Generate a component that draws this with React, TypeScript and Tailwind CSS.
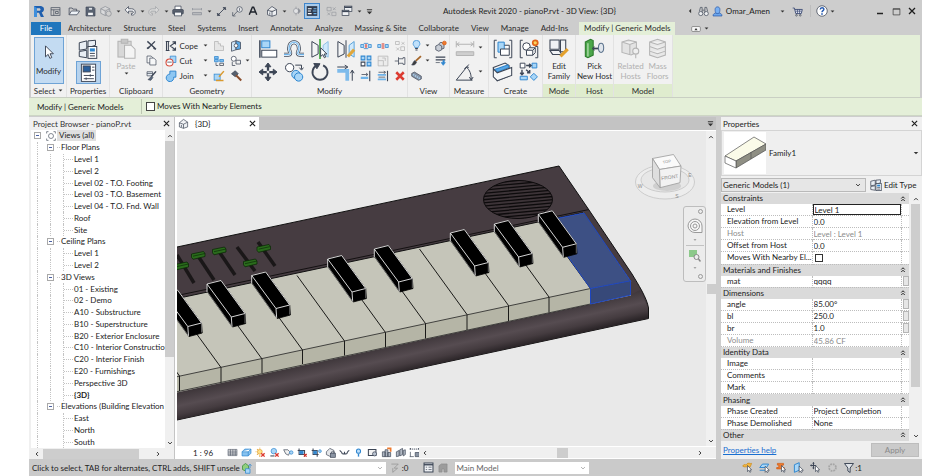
import { Fragment, type ReactNode } from "react";

const INK = "#3d4656";
const BLUE = "#2f86cf";
const SKY = "#a9d6f7";
const MUTE = "#b4b4b4";

/* Icon drawings, all on a 16 x 16 grid. */
const ICONS: Record<string, ReactNode> = {
  home: <><rect x="1.5" y="2.5" width="13" height="11" /><path d="M1.5 5.5h13M5.5 5.5v8M8 8h4v3H8z" /></>,
  open: <><path d="M1.5 13V4h4l1 1.5h5V8" /><path d="M1.5 13l3-5h11l-3.500 5z" fill="#eef2f7" /></>,
  save: <><path d="M1.5 1.5h11l2 2v11h-13z" fill="#5d6675" /><rect x="4" y="9" width="8" height="5" fill="#f4f6f8" /><path d="M5 2h6v4H5z" fill="#dfe3e8" /></>,
  sync: <><path d="M1 5l6-3 6 3v6l-6 3-6-3zM1 5l6 3 6-3M7 8v6" stroke="#8b8f96" fill="#d9dadc" /><circle cx="11.5" cy="11.5" r="3.5" stroke="#8b8f96" fill="#cfcfcf" /></>,
  undo: <path d="M1.5 6.5L6 2v3h4c3 0 5 2 5 4.500S13 13.500 11 13.500h-1v-2.300h1c2 0 2-3 0-3H6v3z" fill="#f3f4f6" />,
  redo: <path d="M14.500 6.500L10 2v3H6C3 5 1 7 1 9.500s2 4 4 4h1v-2.300H5c-2 0-2-3 0-3h5v3z" stroke="#a2a4a8" fill="#d8d8d8" />,
  print: <><path d="M4 6V1.500h8V6" fill="#fff" /><rect x="1" y="6" width="14" height="6" rx="1" fill="#59616e" /><rect x="3.5" y="9.5" width="9" height="5" fill="#f5f6f7" /></>,
  dimen: <path d="M2 4v3M14 4v3M2 5.500h12M2 10h12v3H2z" stroke="#8e9299" fill="#b9bbbe" />,
  measure: <><path d="M3 13L13 3" strokeWidth="1.3" /><path d="M1.500 10.500L5.500 14.500M10.500 1.500L14.500 5.500" strokeWidth="1.2" /><path d="M2 14l.5-3.500 3 3zM14 2l-.5 3.500-3-3z" fill={INK} /></>,
  tag: <><circle cx="11" cy="5" r="4" fill="#e8e9eb" /><path d="M8 7.500L2 14M1 9v5.500h4M11 3v4" /></>,
  textA: <path d="M2 14L7 2h2l5 12M4.200 9.500h7.600" strokeWidth="2.3" stroke="#1f242c" />,
  cube: <path d="M2 7l6-5 6 4v7l-6 2-6-2zM2 7l6 2 6-3M8 9v6M5 10v3" fill="#eef0f3" />,
  section: <><circle cx="8" cy="8" r="4" fill="#e2e3e5" stroke="#8b8f96" /><path d="M12 4l3 4-3 4zM8 1v3M8 12v3" fill="#8b8f96" stroke="#8b8f96" /></>,
  thin: <><rect x="1" y="1.5" width="14" height="13" fill="#2f3b4e" stroke="none" /><path d="M2.500 5h5M2.500 8h4M2.500 11.500h5" stroke="#fff" strokeWidth="1.5" /><path d="M10 5h4M9 8h5M10 11.500h4" stroke="#6fb6ee" strokeWidth="1.5" /></>,
  closeh: <path d="M1.500 2h6v5h-6zM8.500 9h6v5h-6zM10 2l4 4M14 2l-4 4M2 9.500l4 4M6 9.500l-4 4" stroke="#989ba0" />,
  switchw: <><rect x="4.5" y="1.5" width="10" height="7" fill="#eef0f3" /><path d="M4.500 3h10" strokeWidth="2" /><rect x="1.5" y="7" width="9" height="7" fill="#eef0f3" /><path d="M1.500 8.500h9" strokeWidth="2" /></>,
  bino: <><circle cx="4" cy="11" r="3" fill="#eceef0" /><circle cx="12" cy="11" r="3" fill="#eceef0" /><path d="M2 8l1.500-6h2.500v7M14 8l-1.500-6H10v7M6.500 6h3" /></>,
  user: <><path d="M1.500 14.500c0-4 3-4 4.500-4.500h4c1.500.5 4.500.5 4.500 4.500z" fill="#6ea8ec" stroke="#2453a5" /><path d="M4.500 5c0-5 7-5 7 0s-1.500 6-3.500 6-3.500-1-3.500-6z" fill="#79b0f2" stroke="#2453a5" /></>,
  cart: <><path d="M1 3h2.500l2 8h8l1.500-6H4" fill="#e2e6f2" stroke="#3c4a73" strokeWidth="1.3" /><path d="M5 7.500h9M8 5v6M11 5v6" stroke="#3c4a73" /><circle cx="6.5" cy="13.5" r="1.2" /><circle cx="12" cy="13.5" r="1.2" /></>,
  help: <><circle cx="8" cy="8" r="7" fill="#fff" stroke="#3d4656" /><path d="M5.700 6c0-3 4.800-3 4.800-.3 0 1.800-2.500 1.800-2.500 4" stroke="#2358b0" strokeWidth="1.9" /><circle cx="8" cy="12" r=".7" fill="#2358b0" stroke="#2358b0" /></>,
  cursor: <path d="M4 1v12.500l3-2.800 2 4.600 2.200-1-2-4.300H13z" fill="#fff" strokeWidth="1.1" />,
  typeprops: <><path d="M1 3l6-1.500V8L1 9zM8 1.500l6-.5v4l-6 2zM1 10l6-1v6l-6-1z" fill="#e9eef4" /><rect x="8" y="6" width="7" height="9.5" fill="#fff" /><rect x="9.5" y="7.5" width="4" height="2.5" fill={BLUE} stroke="none" /><path d="M9.500 11.500h4M9.500 13.500h4" /></>,
  props: <><rect x="2" y="1" width="12" height="14.5" fill="#fff" /><rect x="3.5" y="2.5" width="6" height="5" fill="#2a5f9c" /><path d="M11 3.500h2M11 6h2M4 10.500h8.500M4 13.200h8.500M9.500 9.500v2M6 12.200v2" /></>,
  paste: <><rect x="1.5" y="2.5" width="10" height="12" fill="#d8d8d8" stroke={MUTE} /><path d="M4 1h5v3H4z" fill="#c6c6c6" stroke={MUTE} /><path d="M6.500 5.500h5l3 3v7h-8z" fill="#f4f4f4" stroke={MUTE} /></>,
  cut: <><path d="M2 2l11 10M13 2L3 12" strokeWidth="2" /><path d="M1.500 12.500l3-2M14.500 13.500l-3.500-2" strokeWidth="2.5" /></>,
  copy: <><path d="M1.500 1.500h6l2 2v8h-8z" fill="#f6f7f8" /><path d="M5.500 4.500h6l3 3v7h-9z" fill="#f6f7f8" /></>,
  match: <><path d="M1.500 2.500h8v6h-8zM1.500 5h8" fill="#e8edf3" /><path d="M14.500 2L8 9.500" strokeWidth="2.2" /><path d="M8 9l2 2-3 4-4-1z" fill="#56657a" /></>,
  cope: <path d="M2 2v12M4.500 2v12M1 2h5M1 14h5M14 3L7 8l7 5M10 2.500h4v3.500M10 13.500h4V10" strokeWidth="1.4" />,
  cutg: <><path d="M7 1.500h7.500V10H7z" fill={SKY} stroke={BLUE} /><circle cx="6" cy="10" r="4.7" fill="#fff" stroke="#d64b3c" strokeWidth="1.4" /><path d="M3 9.500h6" stroke={INK} /></>,
  joing: <path d="M6.500 1.500h8v8h-3a5 5 0 11-5-4z" fill="#8ec7f2" stroke={BLUE} strokeWidth="1.3" />,
  notch: <path d="M2 2h5v3h3v3h4v6H2z" fill="#e6e6e6" stroke={MUTE} />,
  split: <><path d="M2 2h5v3H2zM9 6h5v3H9zM2 6h5v3H2z" fill="#7dbdf0" stroke={BLUE} /><path d="M9 11h5v3H9zM4 10v4h3" /></>,
  paintb: <><rect x="1.5" y="5.5" width="8" height="8" fill={SKY} stroke={BLUE} /><path d="M14.500 1.500L8 9M4 14h10" stroke="#d99a30" strokeWidth="2" /></>,
  wall: <><path d="M2 3l6-2v12l-6 2z" fill="#cfe5f7" /><path d="M8 1l6 2v9l-6 1z" fill="#5aa8e6" /><circle cx="8" cy="7.5" r="2.5" fill="#fff" /></>,
  beamj: <><circle cx="5" cy="5" r="3.3" fill="#fff" /><path d="M8 7h6v5H8zM3 9v5h4" fill="#f0f0f0" /></>,
  hammer: <><path d="M2 5l5-4 4 4-4 4z" fill="#56606e" /><path d="M8 7l7 7" stroke="#8a4d2c" strokeWidth="2.6" /></>,
  align: <><path d="M1.500 1v14" strokeWidth="1.2" /><rect x="3" y="1.5" width="6.5" height="5.5" fill={SKY} stroke={BLUE} /><rect x="3" y="9" width="12" height="5.5" fill="#fff" /></>,
  offset: (
    <>
      <path d="M0 12.500h3.500c1.500 0 1.800-1 1.200-2.200C3.200 7 4.500 2.500 8 2.500s4.800 4.500 3.300 7.800c-.6 1.200-.3 2.200 1.200 2.200H16" strokeWidth="3.2" />
      <path d="M0 12.500h3.500c1.500 0 1.800-1 1.200-2.200C3.200 7 4.500 2.500 8 2.500s4.800 4.500 3.300 7.800c-.6 1.200-.3 2.200 1.200 2.200H16" stroke="#e9f4fd" strokeWidth="2" />
      <path d="M0 12.500h3.500c1.500 0 1.800-1 1.200-2.200C3.200 7 4.500 2.500 8 2.500s4.800 4.500 3.300 7.800c-.6 1.200-.3 2.200 1.200 2.200H16" stroke="#5aa8e6" strokeWidth=".8" />
    </>
  ),
  mirrorA: <><path d="M1.500 2l5 3v7l-5 2.500z" fill="#f3f4f5" /><path d="M14.500 2l-4 3v7l4 2.500z" fill="#cfe8fb" stroke="#8fc0e6" /><path d="M8 0v16" stroke="#3aa33a" strokeWidth="1.3" /><path d="M8.500 7v7l1.700-1.500L11.500 15l1-.5-1.200-2.500H13.500z" fill="#fff" strokeWidth=".8" /></>,
  mirrorB: <><path d="M1.500 2l5 3v7l-5 2.500z" fill="#f3f4f5" /><path d="M14.500 2l-4 3v7l4 2.500z" fill="#cfe8fb" stroke="#5ba4da" /><path d="M8 1v14" /><path d="M14.500 8.500L9.500 14" stroke="#e0a63a" strokeWidth="2.4" /></>,
  move: <><path d="M8 3v10M3 8h10" strokeWidth="1.8" /><path d="M5.700 3.800L8 .8l2.300 3zM5.700 12.200L8 15.200l2.300-3zM3.800 5.700L.8 8l3 2.300zM12.200 5.700l3 2.300-3 2.300z" fill={INK} /><path d="M7 7h2v2H7z" fill="#f1f1f1" stroke="none" /></>,
  copym: <><circle cx="4.5" cy="4.5" r="3.3" fill="#fff" /><path d="M9 2.500h5v3M12.300 4.500L14 6.500l1.500-2" /><circle cx="9.5" cy="10" r="3.3" fill={SKY} stroke={BLUE} /><circle cx="11.7" cy="12" r="3.3" fill={SKY} stroke={BLUE} /></>,
  rotate: <><path d="M10.500 2.700a6 6 0 11-5 0" strokeWidth="1.5" /><path d="M3 1.200l5 .2-2.500 4z" fill={INK} /></>,
  trim: <><path d="M1 7h8v8" stroke="#7dbbeb" strokeWidth="3" /><path d="M1 4h8M7 2.500L9.500 4 7 5.500M13 15V7M11.500 9L13 6.500 14.500 9" /></>,
  splite: <><path d="M1 6h4v4H1zM11 6h4v4h-4z" fill={SKY} stroke={BLUE} /><path d="M7 8h2M8 5v6" stroke="#d9443a" strokeWidth="1.5" /><path d="M5 4.500h6M5 11.500h6" stroke={BLUE} /></>,
  splitg: <><path d="M1 6h4v4H1zM11 6h4v4h-4z" fill={SKY} stroke={BLUE} /><path d="M7 4v8M9 4v8" stroke="#d9443a" /></>,
  unpin: <path d="M2 2h5v4H2zM9 9h5v5H9zM3 10l4 4M7 10l-4 4M10 3l4 3M14 3l-4 3" stroke={MUTE} />,
  array: <><path d="M1.500 1.500h5v5h-5zM9.500 1.500h5v5h-5zM9.500 9.500h5v5h-5z" fill={SKY} stroke={BLUE} strokeWidth="1.4" /><path d="M1.500 9.500h5v5h-5z" fill="#fff" strokeWidth="1.4" /></>,
  scale: <path d="M1.500 1.500h13v13h-13zM1.500 7.500h7v7M11 4h-4M11 4v4" stroke={MUTE} fill="#ececec" />,
  pin: <path d="M1 8h5M6 3v10M6 5h6V3.500h2.500v9H12V11H6" fill="#f2f2f2" />,
  trims: <><path d="M13 1v14" strokeWidth="1.5" /><path d="M1 10.500h10" stroke="#6fb4ea" strokeWidth="3" /><path d="M2 6h8M8 4l2.500 2L8 8" /></>,
  trimm: <><path d="M14 1v14" strokeWidth="1.5" /><path d="M1 6.500h11M1 12.500h11" stroke="#6fb4ea" strokeWidth="2.5" /><path d="M2 3h9M2 9.500h9M9 1.500L11.500 3 9 5" /></>,
  del: <path d="M3 3l10 10M13 3L3 13" stroke="#dc3b31" strokeWidth="3.4" />,
  bulb: <><path d="M5.500 11c0-2-2.500-3-2.500-5.500a5 5 0 0110 0C13 8 10.500 9 10.500 11z" fill="#bfe0fb" stroke={BLUE} /><path d="M6 12.500h4M6.500 14.500h3" strokeWidth="1.5" /></>,
  displace: <><path d="M1 8l4-2 4 2v5l-4 2-4-2zM5 5l3-2 4 2v6l-3 1" fill="#c9ced6" /><circle cx="12.5" cy="4" r="2.5" fill="#ee7a2e" stroke="#d9601a" /></>,
  brush: <><path d="M14.500 1.500L7 8.500" stroke="#a5662a" strokeWidth="2.6" /><path d="M6 8l2 2.500C7 14 4 15 1 14.500 3 13 3 9 6 8z" fill="#3c3c3c" /></>,
  lines: <><path d="M1 3h14M1 7h14" strokeWidth="1.8" /><path d="M1 11h6" /><path d="M11.500 8v3H9l3 4 3-4h-1.500V8z" fill={BLUE} stroke={BLUE} /></>,
  tape: <><path d="M1 5l4-2 10 6v4l-4 2L1 9z" fill="#8793a5" /><path d="M3 6.500l10 6" stroke={SKY} strokeWidth="2" strokeDasharray="2 1.2" /></>,
  dim2: <><path d="M1 5h14M1 2.500v5M15 2.500v5M3.500 3.500L1.500 5l2 1.500M12.500 3.500l2 1.500-2 1.500" stroke={MUTE} /><path d="M1 11h14v3H1z" fill="#cfcfcf" stroke={MUTE} /></>,
  angle: <><path d="M1 14.500h13M1 14.500L11 2" /><path d="M9 4c3 2.500 4 6 4 10M7.500 5.500L9 4l2 .3M11.500 12l1.500 2.500 1.500-2.500" /></>,
  group: <><path d="M3 1H1v14h2M13 1h2v14h-2" /><path d="M4 2.500h5v8H4z" fill={SKY} stroke={BLUE} /><path d="M6 8h7v5H6zM9 5h4v3" fill="#fff" /></>,
  similar: <><path d="M3 1H1v14h2M13 6h2v9h-2" /><circle cx="6" cy="6" r="3" fill="#fff" /><path d="M6 9l2-2h5v4l-2 2H6zM6 9h5l2-2M11 9v4" fill="#fff" /><circle cx="13" cy="3" r="2" fill="#fbd15b" stroke="#e0641b" strokeWidth="1.4" /></>,
  folder: <><path d="M1 5l9-3.500 3 2v8L4 15z" fill="#f2f4f6" /><path d="M2 6.500l10-3.500 1 2-9 3.500z" fill="#5aa8e6" stroke={BLUE} /><path d="M1 6l3 3 11-4v6L4 15l-3-3z" fill="#f6f7f8" /></>,
  assemble: <><path d="M1 1h4v4H1z" fill="#fff" /><path d="M11 1h4v4h-4zM1 12h6v3H1zM12.500 9.500L15.500 12.500l-3 3-3-3z" fill={SKY} stroke={BLUE} /><path d="M6 3h4M8.500 1.500L10.200 3 8.500 4.500M2.500 6.500v4M1 9l1.500 1.700L4 9M6 6.500L9 9M9 6.800V9H6.800" strokeWidth="1.2" /></>,
  editfam: <><path d="M1.500 1.500h7v7h-7zM9.500 1.500h4v9h-4zM1.500 9.500h7l2 3h-7z" fill="#f0f2f5" /><path d="M15 8.500L9.500 14" stroke="#e3a02c" strokeWidth="2.4" /></>,
  host: <><path d="M1 3l4-2 2 1v11l-4 2-2-1z" fill="#4ca64a" stroke="#2c7a2c" /><path d="M3 4v10" stroke="#cfeccb" /><path d="M7 8h4" strokeWidth="1.3" /><path d="M8 6.500L6.500 8 8 9.500" /><ellipse cx="13" cy="7.5" rx="2" ry="3.5" fill="#dfe5ec" stroke="#5b728c" /></>,
  relhost: <><path d="M1.500 3l5-1.500 6 1.500v8l-4 2-7-2zM1.500 3l6 2 5-2M7.500 5v8" fill="#e3e3e3" stroke={MUTE} /><circle cx="12" cy="10" r="2.3" fill="#efefef" stroke={MUTE} /><path d="M12 12.500v3" stroke={MUTE} /></>,
  floors: <path d="M2 3l6-2 6 2v10l-6 2-6-2zM2 3l6 2 6-2M2 6.500l6 2 6-2M2 10l6 2 6-2" fill="#e8e8e8" stroke={MUTE} />,
  views: <><circle cx="8" cy="8" r="4" /><path d="M1 4V1h3M12 1h3v3M15 12v3h-3M4 15H1v-3" /></>,
  filter: <path d="M2 2h12L9.500 8v6l-3-2V8z" fill="#dfe3e8" strokeWidth="1.3" />,
  worksets: <><path d="M2 5l4-3 4 3v5l-4 2-4-2z" fill="#8fd07d" stroke="#3c8a35" /><path d="M6 9h6v6H6z" fill={SKY} stroke={BLUE} /><path d="M12 3v5M10 5l2-2 2 2" stroke={BLUE} /></>,
  editreq: <path d="M2 3h10l-6 6h5l-7 6V9" stroke="#8f8f8f" fill="#c9c9c9" />,
  optset: <><path d="M1.500 1.500h13v13h-13z" fill="#f0f2f5" strokeWidth="1.5" /><path d="M1.500 4h13" strokeWidth="2" /><path d="M4 7.500h2M8 7.500h4.500M4 11h2M8 11h4.500" /></>,
  optadd: <path d="M1.500 4.500l4-3h9v13h-5v-5h-3v5h-5z" fill="#9c9c9c" stroke="#8a8a8a" />,
  selA: <><path d="M1 6c3-5 4 0 6-3s5 0 7-1l-2 5H3z" fill="#f3b73d" stroke="#c9871a" /><path d="M8 5v9l2-2 1.500 3 1.500-1-1.500-2.500H14z" fill="#fff" /></>,
  selB: <><path d="M1 8l4-5h9l-3 5zM1 12h8" stroke={BLUE} fill={SKY} strokeWidth="1.4" /><path d="M9 6v9l2-2 1 2.500 1.500-1-1-2.500H15z" fill="#fff" /></>,
  selC: <><path d="M2 2h9v2.500H9V8h3v2H1V8h3V4.500H2z" fill="#ee7a2e" stroke="#cf5a13" /><path d="M8 5v9l2-2 1.500 3 1.500-1-1.500-2.500H14z" fill="#fff" /></>,
  selD: <><path d="M2 4l7-3v11l-7 3z" fill={SKY} stroke={BLUE} strokeWidth="1.4" /><path d="M9 6v9l2-2 1 2.500 1.500-1-1-2.500H15z" fill="#fff" /></>,
  selE: <><path d="M5 1v8M1 5h8M4 2.500L5 1l1 1.500M2.500 4L1 5l1.500 1M4 8l1 1.500L6 8" strokeWidth="1.5" /><path d="M8 5v9l2-2 1.500 3 1.500-1-1.500-2.500H14z" fill="#fff" /></>,
  gear: <circle cx="8" cy="8" r="5" stroke="#a6a6a6" strokeWidth="2.6" strokeDasharray="2.6 1.3" />,
  vdetail: <path d="M1.500 3.500h13v9h-13zM1.500 6h13M1.500 8.500h13M1.500 10.500h13M5 3.500v9M8.500 3.500v9M12 3.500v9" fill="#f2f2f2" strokeWidth=".8" />,
  vstyle: <path d="M1.500 7l4-4h9v6l-4 4h-9zM1.500 7h9l4-4M10.500 7v6" fill="#86c2f0" stroke={BLUE} />,
  vsun: <><circle cx="7" cy="7" r="3.5" fill="#ffe08a" stroke="#e09a1e" /><path d="M7 1v1M7 12v2M1 7h1M3 3l1 1M3 11l1-1" stroke="#e09a1e" strokeWidth="1.5" /><path d="M9 9l5 5M14 9l-5 5" stroke="#dc3b31" strokeWidth="2" /></>,
  vshadow: <><circle cx="7" cy="6" r="4" fill={SKY} stroke={BLUE} /><path d="M2 13h6" strokeWidth="1.5" /><path d="M9 9l5 5M14 9l-5 5" stroke="#dc3b31" strokeWidth="2" /></>,
  vrender: <><path d="M1 4h6l3 3-2 5-4-2z" fill="#f0f0f0" /><circle cx="12" cy="8" r="2.5" fill={SKY} stroke={BLUE} /></>,
  vcrop: <><path d="M3 2v9h11M1 5h10v9" strokeWidth="1.5" /><path d="M4 6h5v4H4z" fill={BLUE} stroke={BLUE} /><path d="M10 10l4 4M14 10l-4 4" stroke="#dc3b31" strokeWidth="2" /></>,
  vcrop2: <><path d="M3 2v9h8M1 5h8v9" strokeWidth="1.5" /><path d="M4 6h4v4H4z" fill={BLUE} stroke={BLUE} /><circle cx="13" cy="6" r="2" fill={SKY} stroke={BLUE} /></>,
  vlock: <><path d="M2 7l5-5 6 3v5l-5 4-6-3z" fill="#e5e7ea" /><rect x="8" y="9" width="7" height="6" fill="#8a94a3" /><path d="M9.500 9V7h4v2" /></>,
  vglass: <path d="M1 5l3 3c0 3 4 3 4 0 0 3 4 3 4 0 1-2 2-3 3-3M8 8V7" strokeWidth="1.5" />,
  vbulb: <><circle cx="8" cy="6" r="3" fill="#bfe0fb" stroke={BLUE} strokeWidth="1.5" /><path d="M8 10v4" strokeWidth="2" stroke={BLUE} /></>,
  vtemp: <><path d="M2 3.500h11v9H2z" fill="#f3f3f3" strokeWidth="1.5" /><circle cx="11" cy="10" r="3" fill="#b9c2cf" /></>,
  vanal: <><path d="M2 7h4v7H2zM6 4h4v10H6zM10 8h4v6h-4z" fill="#aeb6c2" /><path d="M9 2h5v5" stroke="#ee7a2e" strokeWidth="2.5" /></>,
  vdisp: <path d="M2 7l4-2v8l-4 1zM7 4l4-2v9l-4 2zM12 5l3-1v7l-3 2z" fill="#b3bac5" />,
  vconst: <><path d="M1 3h14M2 1.500v3M14 1.500v3" strokeWidth="1.3" strokeDasharray="2 1" /><path d="M2 7v7M1 14h6" /><path d="M9 8h6v6H9z" fill="#8a94a3" /></>,
  fold: <path d="M4.500 7L8 3.500 11.500 7M4.500 12L8 8.500l3.500 3.500" strokeWidth="2" stroke="#222" />,
  close: <path d="M2 2l12 12M14 2L2 14" strokeWidth="2.6" stroke="#1d1d1d" />,
  max: <path d="M2 3h12v11H2zM2 4h12" stroke="#333" strokeWidth="1.2" />,
  min: <path d="M2 13h12" stroke="#222" strokeWidth="3" />,
  up: <path d="M3 11l5-5 5 5" stroke="#333" strokeWidth="2.6" />,
  down: <path d="M3 5.500l5 5 5-5" stroke="#333" strokeWidth="2.6" />,
  left: <path d="M10.500 3l-5 5 5 5" stroke="#333" strokeWidth="2.6" />,
  right: <path d="M5.500 3l5 5-5 5" stroke="#333" strokeWidth="2.6" />,
  drop: <path d="M2 5h12l-6 6z" fill="#333" stroke="none" />,
  dropbar: <path d="M2 8h12l-6 6zM2 3h12v2H2z" fill="#333" stroke="none" />,
  back: <path d="M11 2v12L5 8z" fill="#333" stroke="none" />,
  panel: <><rect x="1" y="4" width="14" height="8" rx="2" fill="#f5f5f5" stroke="#666" /><path d="M5.500 10h5L8 6.500z" fill="#333" stroke="none" /></>,
};

function Ico({ n, s = 12 }: { n: string; s?: number }) {
  return (
    <svg width={s} height={s} viewBox="0 0 16 16" fill="none" stroke={INK} strokeWidth={s > 14 ? 0.8 : 1} className="block shrink-0" aria-hidden="true">
      {ICONS[n]}
    </svg>
  );
}

function IconButton({ n, s = 12, label, className = "w-4 h-4" }: { n: string; s?: number; label: string; className?: string }) {
  return (
    <button type="button" aria-label={label} className={`flex shrink-0 items-center justify-center ${className}`}>
      <Ico n={n} s={s} />
    </button>
  );
}

const Drop = ({ label }: { label: string }) => <IconButton n="drop" s={5} label={label} className="h-4 w-2" />;

function TitleBar() {
  return (
    <header className="flex h-[22px] items-center pl-[2px]">
      <button type="button" aria-label="Application menu" className="flex h-4 w-4 items-center justify-center">
        <svg width="10" height="11" viewBox="0 0 11 12" aria-hidden="true">
          <path d="M0 0h6c4 0 5 2 5 3.500S10 6.500 8.500 7L11 12H7.500L5.500 7.500H3.300V12H0z" fill="#1f5fae" />
          <path d="M3.300 2.500v2.800h2.400c2 0 2-2.800 0-2.800z" fill="#cdcdcd" />
          <path d="M0 0l3.300 2.500V12H0z" fill="#3f8fdc" />
        </svg>
      </button>
      <IconButton n="home" s={11} label="Home" />
      <span className="w-[3px]" />
      <IconButton n="open" label="Open" />
      <IconButton n="save" s={11} label="Save" />
      <IconButton n="sync" label="Synchronize" />
      <Drop label="Synchronize options" />
      <IconButton n="undo" label="Undo" />
      <Drop label="Undo list" />
      <IconButton n="redo" label="Redo" />
      <Drop label="Redo list" />
      <IconButton n="print" label="Print" />
      <span className="w-[3px]" />
      <IconButton n="dimen" label="Measure" />
      <Drop label="Measure options" />
      <IconButton n="measure" s={11} label="Aligned dimension" />
      <IconButton n="tag" s={11} label="Tag by category" />
      <IconButton n="textA" s={10} label="Text" />
      <span className="w-[3px]" />
      <IconButton n="cube" label="Default 3D view" />
      <Drop label="3D view options" />
      <IconButton n="section" s={10} label="Section" />
      <IconButton n="thin" label="Thin lines" className="h-4 w-4 border border-[#3f86cc] bg-[#a9cbea]" />
      <span className="w-[3px]" />
      <IconButton n="closeh" s={11} label="Close hidden windows" />
      <IconButton n="switchw" label="Switch windows" />
      <Drop label="Window list" />
      <IconButton n="dropbar" s={7} label="Customize toolbar" className="h-4 w-3" />
      <h1 className="flex-1 truncate text-center text-[8px] text-[#222]">Autodesk Revit 2020 - pianoP.rvt - 3D View: {"{3D}"}</h1>
      <IconButton n="back" s={6} label="Collapse search" className="h-4 w-3" />
      <IconButton n="bino" s={11} label="Search" />
      <button type="button" className="flex items-center gap-[3px] text-[8px]">
        <Ico n="user" s={11} />
        Omar_Amen
        <span className="w-1" />
        <Ico n="drop" s={5} />
      </button>
      <IconButton n="cart" s={11} label="App store" className="ml-1 h-4 w-4" />
      <span className="mx-[5px] h-3 w-px bg-[#bdbdbd]" />
      <IconButton n="help" s={12} label="Help" className="h-4 w-3" />
      <Drop label="Help menu" />
      <span className="w-9" />
      <IconButton n="min" s={8} label="Minimize" />
      <IconButton n="max" s={9} label="Maximize" />
      <IconButton n="close" s={8} label="Close" />
      <span className="w-[2px]" />
    </header>
  );
}

const TABS = ["Architecture", "Structure", "Steel", "Systems", "Insert", "Annotate", "Analyze", "Massing & Site", "Collaborate", "View", "Manage", "Add-Ins"];

function Tabs() {
  return (
    <nav className="flex h-[13px] items-stretch pl-[2px] text-[8px] leading-[13px] text-[#2c2c2c]">
      <button type="button" className="mr-px w-[30px] bg-[#1f76bd] text-white">File</button>
      {TABS.map((t) => (
        <button key={t} type="button" className="whitespace-nowrap px-[6px]">{t}</button>
      ))}
      <button type="button" className="ml-[5px] whitespace-nowrap bg-[#e4efd8] px-[5px]">Modify | Generic Models</button>
      <button type="button" aria-label="Minimize ribbon" className="ml-4 flex items-center gap-[3px]">
        <Ico n="panel" s={10} />
        <Ico n="drop" s={5} />
      </button>
    </nav>
  );
}

function Panel({ title, width, green = false, children }: { title: ReactNode; width: string; green?: boolean; children: ReactNode }) {
  return (
    <section className={`flex shrink-0 flex-col border-r border-[#e2e2e2] bg-[#f1f1f1] ${width}`}>
      <div className="flex flex-1 items-start justify-center pt-[3px]">{children}</div>
      <h2 className={`flex h-[13px] items-center justify-center gap-[3px] text-[8px] ${green ? "bg-[#dfecce]" : ""}`}>{title}</h2>
    </section>
  );
}

function Tool({ n, s = 12, text, drop = false, label }: { n: string; s?: number; text?: string; drop?: boolean; label: string }) {
  return (
    <button type="button" aria-label={label} className="flex h-[15px] items-center gap-[3px] whitespace-nowrap text-[8px]">
      <Ico n={n} s={s} />
      {text && <span className="w-5 text-left">{text}</span>}
      {drop && <Ico n="drop" s={5} />}
    </button>
  );
}

function BigTool({ n, lines, off = false }: { n: string; lines: string[]; off?: boolean }) {
  return (
    <button type="button" className={`flex flex-col items-center text-[8px] leading-[10px] ${off ? "text-[#b0b0b0]" : ""}`}>
      <Ico n={n} s={21} />
      <span className="h-[2px]" />
      {lines.map((l) => <span key={l}>{l}</span>)}
    </button>
  );
}

const MODIFY_BIG = [["align", "Align"], ["offset", "Offset"], ["mirrorA", "Mirror by axis"], ["mirrorB", "Mirror by line"], ["move", "Move"], ["copym", "Copy"], ["rotate", "Rotate"], ["trim", "Trim to corner"]];
const MODIFY_SMALL = [["splite", "Split"], ["splitg", "Split with gap"], ["unpin", "Unpin"], ["array", "Array"], ["scale", "Scale"], ["pin", "Pin"], ["trims", "Trim single"], ["trimm", "Trim multiple"], ["del", "Delete"]];

function Ribbon() {
  return (
    <div className="mx-[2px] flex h-[63px] border-b border-[#c9cfc3] bg-[#e4efd8] text-[#2c2c2c]">
      <Panel width="w-[36px]" title={<>Select <Ico n="drop" s={5} /></>}>
        <button type="button" className="-mt-px flex h-[47px] w-[30px] flex-col items-center justify-center gap-[6px] border border-[#6ea3d6] bg-[#c3dbf2] text-[8px]">
          <Ico n="cursor" s={14} />
          Modify
        </button>
      </Panel>
      <Panel width="w-[43px]" title="Properties">
        <div className="flex flex-col items-center gap-[1px]">
          <IconButton n="typeprops" s={20} label="Type properties" className="h-[22px] w-[25px]" />
          <IconButton n="props" s={19} label="Properties" className="h-[23px] w-[25px] border border-[#6ea3d6] bg-[#b7d3ee]" />
        </div>
      </Panel>
      <Panel width="w-[53px]" title="Clipboard">
        <div className="flex gap-[9px]">
          <button type="button" className="flex flex-col items-center text-[8px] leading-[10px] text-[#b0b0b0]">
            <Ico n="paste" s={21} />
            <span className="h-[2px]" />
            Paste
            <Ico n="drop" s={5} />
          </button>
          <div className="flex flex-col">
            <Tool n="cut" s={11} label="Cut" /><Tool n="copy" s={11} label="Copy" /><Tool n="match" s={11} label="Match type" />
          </div>
        </div>
      </Panel>
      <Panel width="w-[89px]" title="Geometry">
        <div className="flex gap-[5px]">
          <div className="flex flex-col">
            <Tool n="cope" text="Cope" drop label="Cope" /><Tool n="cutg" text="Cut" drop label="Cut geometry" /><Tool n="joing" text="Join" drop label="Join" />
          </div>
          <div className="flex flex-col">
            <Tool n="notch" label="Apply coping" /><Tool n="split" label="Wall joins" /><Tool n="paintb" label="Paint" />
          </div>
          <div className="flex flex-col">
            <Tool n="wall" label="Split face" /><Tool n="beamj" drop label="Beam joins" /><Tool n="hammer" label="Demolish" />
          </div>
        </div>
      </Panel>
      <Panel width="w-[156px]" title="Modify">
        <div className="ml-1 grid grid-cols-4 gap-x-[5px] gap-y-[2px]">
          {MODIFY_BIG.map(([n, l]) => <IconButton key={n} n={n} s={20} label={l} className="h-[21px] w-[21px]" />)}
        </div>
        <div className="ml-1 grid grid-cols-3 gap-x-[5px]">
          {MODIFY_SMALL.map(([n, l]) => <Tool key={n} n={n} label={l} />)}
        </div>
      </Panel>
      <Panel width="w-[42px]" title="View">
        <div className="flex gap-[5px]">
          <div className="flex flex-col">
            <Tool n="bulb" s={11} drop label="Hide in view" /><Tool n="brush" s={11} drop label="Override graphics" /><Tool n="tape" s={11} label="Selection box" />
          </div>
          <div className="flex flex-col">
            <Tool n="displace" label="Displace elements" /><Tool n="lines" s={11} label="Linework" />
          </div>
        </div>
      </Panel>
      <Panel width="w-[39px]" title="Measure">
        <div className="flex flex-col gap-[9px] pt-[2px]">
          <Tool n="dim2" s={20} drop label="Measure between" />
          <Tool n="angle" s={20} drop label="Angular dimension" />
        </div>
      </Panel>
      <Panel width="w-[54px]" title="Create">
        <div className="grid grid-cols-2 gap-x-1 gap-y-[2px]">
          <IconButton n="group" s={20} label="Create group" className="h-[21px] w-[22px]" />
          <IconButton n="similar" s={20} label="Create similar" className="h-[21px] w-[22px]" />
          <IconButton n="folder" s={21} label="Create parts" className="h-[21px] w-[22px]" />
          <IconButton n="assemble" s={19} label="Create assembly" className="h-[21px] w-[22px]" />
        </div>
      </Panel>
      <Panel width="w-[33px]" green title="Mode"><BigTool n="editfam" lines={["Edit", "Family"]} /></Panel>
      <Panel width="w-[38px]" green title="Host"><BigTool n="host" lines={["Pick", "New Host"]} /></Panel>
      <Panel width="w-[59px]" green title="Model">
        <div className="flex gap-[3px]">
          <BigTool n="relhost" lines={["Related", "Hosts"]} off />
          <BigTool n="floors" lines={["Mass", "Floors"]} off />
        </div>
      </Panel>
    </div>
  );
}

type Node = { depth: 0 | 1 | 2; text: string; last?: boolean };
const leaf = (text: string, last = false): Node => ({ depth: 2, text, last });
const TREE: Node[] = [
  { depth: 0, text: "Views (all)" },
  { depth: 1, text: "Floor Plans" },
  leaf("Level 1"), leaf("Level 2"), leaf("Level 02 - T.O. Footing"), leaf("Level 03 - T.O. Basement"), leaf("Level 04 - T.O. Fnd. Wall"), leaf("Roof"), leaf("Site", true),
  { depth: 1, text: "Ceiling Plans" },
  leaf("Level 1"), leaf("Level 2", true),
  { depth: 1, text: "3D Views" },
  leaf("01 - Existing"), leaf("02 - Demo"), leaf("A10 - Substructure"), leaf("B10 - Superstructure"), leaf("B20 - Exterior Enclosure"), leaf("C10 - Interior Constructio"), leaf("C20 - Interior Finish"), leaf("E20 - Furnishings"), leaf("Perspective 3D"), leaf("{3D}", true),
  { depth: 1, text: "Elevations (Building Elevation", last: true },
  leaf("East"), leaf("North"), leaf("South"),
];
const ELEVATIONS = TREE.findIndex((n) => n.depth === 1 && n.last);

const Line = ({ on = true }: { on?: boolean }) => (
  <span className="flex w-[13px] shrink-0 justify-center self-stretch">{on && <span className="border-l border-dotted border-[#c4c4c4]" />}</span>
);
const Minus = () => (
  <span className="flex w-[13px] shrink-0 items-center justify-center">
    <button type="button" aria-label="Collapse" className="flex h-[7px] w-[7px] items-center justify-center border border-[#a9a9a9] bg-white">
      <span className="h-px w-[3px] bg-[#4c62a5]" />
    </button>
  </span>
);

function TreeRow({ node, index }: { node: Node; index: number }) {
  return (
    <li className="flex min-h-0 flex-1 items-center whitespace-nowrap">
      {node.depth === 0 && (
        <>
          <Minus />
          <span className="mr-px ml-[2px]"><Ico n="views" s={10} /></span>
          <span className="bg-[#e0e0e0] px-[2px] leading-[11px]">{node.text}</span>
        </>
      )}
      {node.depth === 1 && (
        <>
          <Line /><Minus />
          <span className="mr-[1px] w-[3px] border-t border-dotted border-[#c4c4c4]" />
          <span>{node.text}</span>
        </>
      )}
      {node.depth === 2 && (
        <>
          <Line /><Line on={index < ELEVATIONS} /><Line />
          <span className="-ml-[6px] mr-px w-[9px] shrink-0 border-t border-dotted border-[#c4c4c4]" />
          <span className={node.text === "{3D}" ? "font-bold" : ""}>{node.text}</span>
        </>
      )}
    </li>
  );
}

function ProjectBrowser() {
  return (
    <aside className="flex w-[146px] shrink-0 flex-col border-r border-[#c4c4c4] bg-[#f0f0f0] pl-[2px]">
      <div className="flex h-[13px] items-center justify-between pl-[2px] pr-1">
        <h2 className="text-[8px] text-[#333]">Project Browser - pianoP.rvt</h2>
        <IconButton n="close" s={7} label="Close browser" className="h-3 w-2" />
      </div>
      <div className="flex min-h-0 flex-1">
        <ul className="flex min-w-0 flex-1 flex-col bg-white text-[8px] leading-[11px] text-[#222]">
          {TREE.map((n, i) => <TreeRow key={i} node={n} index={i} />)}
        </ul>
        <div className="flex w-[9px] flex-col items-center bg-[#f0f0f0]">
          <IconButton n="up" s={6} label="Scroll up" className="h-[11px] w-[9px]" />
          <span className="h-[216px] w-[9px] bg-[#cdcdcd]" />
          <span className="flex-1" />
          <IconButton n="down" s={6} label="Scroll down" className="h-[11px] w-[9px]" />
        </div>
      </div>
      <div className="flex h-[11px] items-center">
        <IconButton n="left" s={6} label="Scroll left" className="h-[11px] w-[12px]" />
        <span className="h-[10px] w-24 bg-[#cdcdcd]" />
        <span className="flex-1" />
        <IconButton n="right" s={6} label="Scroll right" className="mr-[10px] h-[11px] w-[12px]" />
      </div>
    </aside>
  );
}

/* Front edge of each white key: x, y of the top rim, y of the bottom rim. */
const RIM = [
  [138, 385, 400], [179.5, 376, 391], [221, 367.5, 382.5], [262, 359, 373], [302.5, 350, 364], [344.5, 341, 355.5],
  [385.5, 332.5, 347], [425.5, 323.5, 338.5], [467, 314.5, 330], [508.5, 305.5, 321], [549, 297, 312.5], [590.5, 288.5, 304],
];
const BLACK = [[163.5, 293.5], [207, 284], [251.7, 275.5], [327.7, 259], [374.3, 249], [450.3, 233], [494.3, 224], [538.3, 214.3]];
/* Slot start, slot end, cap corner. */
const SLIDERS = [
  [177, 255, 194, 283, 175, 262], [198, 256, 214, 280, 191.5, 251.5], [218, 250, 235, 275, 212.5, 247],
  [237, 247, 255, 271, 243.5, 259], [258, 242, 275, 266, 257, 244.5],
];

function Piano() {
  return (
    <svg viewBox="177 131 529 315" preserveAspectRatio="xMinYMin slice" className="block h-full w-full" role="img" aria-label="Piano model in 3D view">
      <defs>
        <linearGradient id="roll" gradientUnits="userSpaceOnUse" x1="400" y1="344" x2="406" y2="371">
          <stop offset="0" stopColor="#3f373b" />
          <stop offset="0.45" stopColor="#564c51" />
          <stop offset="0.75" stopColor="#453c40" />
          <stop offset="1" stopColor="#2b2528" />
        </linearGradient>
        <clipPath id="spk"><ellipse cx="518" cy="199.5" rx="34.5" ry="19" /></clipPath>
      </defs>
      <path d="M170 248.500L559 166l30 44 43 64c6 10 15 24 16.500 34v10.500L170 421.500z" fill="#463c41" stroke="#111" strokeWidth="1" />
      <path d="M170 393L630 295l10-5 8 18v10.500L170 421.500z" fill="url(#roll)" />
      <path d="M170 297L589 209.500" stroke="#141112" strokeWidth="1" />
      <path d="M170 300L583 212.500l48 69v14L170 394z" fill="#c5c5b9" />
      <path d="M170 300L583 212.500" stroke="#111" strokeWidth="1" />
      <path d="M138 385L590.500 288.500V304L138 400z" fill="#b5b5a6" />
      <path d="M138 385L590.500 288.500M138 400L590.500 304" stroke="#222" strokeWidth=".8" />
      {RIM.map(([x, t, b]) => <path key={x} d={`M${x - 47.5} ${t - 65.5}L${x} ${t}V${b}`} stroke="#1a1a18" strokeWidth="1" fill="none" />)}
      <path d="M543.500 221.500L584 213l46.500 68-40 7.500z" fill="#3d5084" />
      <path d="M590.500 288.500l40-7.800V295l-40 9z" fill="#374979" />
      <path d="M554 219L584 213l46.500 68V295l-40 9V288.500l-24-34M590.500 288.500l40-7.700" fill="none" stroke="#1d46c0" strokeWidth="1" />
      {SLIDERS.map(([x1, y1, x2, y2, cx, cy]) => (
        <Fragment key={x1}>
          <path d={`M${x1} ${y1}L${x2} ${y2}`} stroke="#1a1718" strokeWidth="3.5" />
          <path d={`M${cx} ${cy + 2.5}l12-2.500 1.500 2v3l-12 2.800-1.500-2z`} fill="#2a6b1c" stroke="#0d2a08" strokeWidth=".8" />
          <path d={`M${cx + 1.5} ${cy + 4.7}l12-2.700`} stroke="#0d2a08" strokeWidth=".7" />
        </Fragment>
      ))}
      <ellipse cx="518" cy="199.5" rx="34.5" ry="19" fill="#3c3337" stroke="#0d0b0c" strokeWidth="1" />
      <g clipPath="url(#spk)" stroke="#0d0b0c" strokeWidth="1.3">
        {Array.from({ length: 14 }, (_, i) => <path key={i} d={`M480 ${184 + i * 3.2}L556 ${177 + i * 3.2}`} />)}
      </g>
      {BLACK.map(([x, y]) => (
        <g key={x} transform={`translate(${x} ${y})`} strokeLinejoin="round">
          <path d="M0 0L14-3.500 38 29.500 38.700 39.500 25.500 43 .500 8z" fill="#000" stroke="#000" strokeWidth=".8" />
          <path d="M0 0L14-3.500 38 29.500 24.300 33zM24.300 33L25 42.500M0 0V8" fill="none" stroke="#ececec" strokeWidth=".9" />
          <path d="M.500 8L25 42.500M38 29.500V39" fill="none" stroke="#8d8d8d" strokeWidth=".7" />
        </g>
      ))}
      {/* View cube and compass */}
      <g fill="none" stroke="#c4c4c4" strokeWidth=".8">
        <ellipse cx="665" cy="182" rx="29.5" ry="17" fill="#ededed" />
        <ellipse cx="665" cy="180" rx="24" ry="12" fill="#e7e7e7" />
        <ellipse cx="667" cy="186" rx="14" ry="5" fill="#cfcfcf" stroke="none" />
        <g fill="#fafafa" stroke="#9a9a9a">
          <path d="M652.500 158.500l21-4 7.500 11.500-21.500 3.500z" />
          <path d="M659.500 169.500l21.500-3.500-1 16.700-20 5z" fill="#f2f2f2" />
          <path d="M652.500 158.500l7 11 .5 18.200-7.500-10z" fill="#dedede" />
        </g>
      </g>
      <g fontFamily="'Liberation Sans', sans-serif" fill="#8a8a8a" fontSize="5" textAnchor="middle">
        <text x="670" y="179" transform="rotate(-9 670 179)">FRONT</text>
        <text x="667" y="163" transform="rotate(-9 667 163)" fontSize="4">TOP</text>
        <text x="640" y="188">W</text>
        <text x="690" y="177">E</text>
        <text x="677" y="198">S</text>
      </g>
    </svg>
  );
}

function NavBar() {
  return (
    <div className="absolute top-[75px] right-0 flex h-[76px] w-[23px] flex-col items-center justify-between rounded-[3px] border border-[#bdbdbd] bg-[#ececec] py-[2px]">
      <span className="mr-[2px] h-[5px] w-[5px] self-end rounded-full border border-[#999]" />
      <button type="button" aria-label="Steering wheel">
        <svg width="16" height="16" viewBox="0 0 16 16" fill="none" stroke="#999" className="block" aria-hidden="true">
          <path d="M1 8a7 7 0 0114 0v6.500H8A7 7 0 011 8z" fill="#f7f7f7" /><circle cx="8" cy="8" r="4.5" /><circle cx="8" cy="8" r="2" />
        </svg>
      </button>
      <span className="opacity-50"><Ico n="drop" s={4} /></span>
      <span className="h-px w-[18px] bg-[#c2c2c2]" />
      <button type="button" aria-label="Zoom region">
        <svg width="12" height="12" viewBox="0 0 12 12" fill="none" className="block" aria-hidden="true">
          <rect x="0" y="0" width="8" height="7" fill="#8cc98a" /><circle cx="7.5" cy="7" r="2.5" fill="#eee" stroke="#888" /><path d="M9.500 9l2 2.500" stroke="#888" strokeWidth="1.5" />
        </svg>
      </button>
      <span className="opacity-50"><Ico n="drop" s={4} /></span>
      <span className="mr-[2px] h-[5px] w-[5px] self-end rounded-full border border-[#999]" />
    </div>
  );
}

const VIEW_TOOLS = ["vdetail", "vstyle", "vsun", "vshadow", "vrender", "vcrop", "vcrop2", "vlock", "vglass", "vbulb", "vtemp", "vanal", "vdisp", "vconst"];

function Viewport() {
  return (
    <main className="flex min-w-0 flex-1 flex-col bg-white">
      <div className="flex h-[14px] items-stretch border-b border-white bg-[#c3c3c3]">
        <div className="flex w-[84px] items-center gap-[6px] bg-white px-[3px] text-[8px]">
          <Ico n="cube" s={11} />
          <span className="flex-1">{"{3D}"}</span>
          <IconButton n="close" s={7} label="Close view" className="h-3 w-2" />
        </div>
        <span className="flex-1" />
        <IconButton n="dropbar" s={7} label="View tabs" className="h-[13px] w-[11px]" />
      </div>
      <div className="flex min-h-0 flex-1 pl-[2px]">
        <div className="relative min-w-0 flex-1 overflow-hidden bg-[#e9e9e9]">
          <Piano />
          <NavBar />
        </div>
        <div className="flex w-[10px] flex-col items-center bg-[#f0f0f0]">
          <IconButton n="up" s={6} label="Scroll up" className="h-[11px] w-[10px]" />
          <span className="flex-1" />
          <span className="h-[10px] w-[9px] bg-[#cdcdcd]" />
          <span className="flex-1" />
          <IconButton n="down" s={6} label="Scroll down" className="h-[11px] w-[10px]" />
        </div>
      </div>
      <div className="flex h-[13px] items-center">
        <span className="w-[52px] pl-[18px] text-[8px]">1 : 96</span>
        <div className="flex gap-[4px]">
          {VIEW_TOOLS.map((n) => <IconButton key={n} n={n} s={11} label={n.slice(1)} className="h-[11px] w-[10px]" />)}
        </div>
        <div className="flex h-[11px] flex-1 items-center bg-[#f0f0f0]">
          <IconButton n="left" s={6} label="Scroll left" className="h-[11px] w-3" />
          <span className="flex-1" />
          <span className="h-[10px] w-[11px] bg-[#cdcdcd]" />
          <span className="flex-1" />
          <IconButton n="right" s={6} label="Scroll right" className="mr-[10px] h-[11px] w-3" />
        </div>
      </div>
    </main>
  );
}

type Row = { name: string; value?: string; kind?: "head" | "off" | "check" | "focus"; btn?: boolean };
const ROWS: Row[] = [
  { name: "Constraints", kind: "head" },
  { name: "Level", value: "Level 1", kind: "focus" },
  { name: "Elevation from Level", value: "0.0" },
  { name: "Host", value: "Level : Level 1", kind: "off" },
  { name: "Offset from Host", value: "0.0" },
  { name: "Moves With Nearby El...", kind: "check" },
  { name: "Materials and Finishes", kind: "head" },
  { name: "mat", value: "qqqq", btn: true },
  { name: "Dimensions", kind: "head" },
  { name: "angle", value: "85.00°", btn: true },
  { name: "bl", value: "250.0", btn: true },
  { name: "br", value: "1.0", btn: true },
  { name: "Volume", value: "45.86 CF", kind: "off" },
  { name: "Identity Data", kind: "head" },
  { name: "Image", value: "" },
  { name: "Comments", value: "" },
  { name: "Mark", value: "" },
  { name: "Phasing", kind: "head" },
  { name: "Phase Created", value: "Project Completion" },
  { name: "Phase Demolished", value: "None" },
  { name: "Other", kind: "head" },
];

function PropertyRow({ row }: { row: Row }) {
  if (row.kind === "head") {
    return (
      <tr className="bg-[#dadada]">
        <th colSpan={3} scope="colgroup" className="p-0 font-normal">
          <div className="flex items-center justify-between pr-[2px] pl-[2px]">
            {row.name}
            <IconButton n="fold" s={8} label={`Collapse ${row.name}`} className="h-[8px] w-[8px]" />
          </div>
        </th>
      </tr>
    );
  }
  const id = `p-${row.name.replace(/\W+/g, "-")}`;
  const off = row.kind === "off";
  return (
    <tr className={`border-b border-dotted border-[#bdbdbd] ${off ? "text-[#8c8c8c]" : ""}`}>
      <th scope="row" className="truncate p-0 pl-[6px] text-left font-normal"><label htmlFor={id}>{row.name}</label></th>
      <td className="border-x border-dotted border-[#bdbdbd] p-0">
        {row.kind === "check" ? (
          <input id={id} type="checkbox" className="ml-[2px] block h-[8px] w-[8px] appearance-none border border-[#333] bg-white" />
        ) : (
          <input id={id} defaultValue={row.value} disabled={off} className={`block h-[11px] w-full px-px leading-[10px] ${row.kind === "focus" ? "border border-[#222]" : ""}`} />
        )}
      </td>
      <td className="p-0">{row.btn && <button type="button" aria-label={`Associate ${row.name}`} className="ml-px block h-[10px] w-[6px] border border-[#b5b5b5] bg-[#e6e6e6]" />}</td>
    </tr>
  );
}

function Properties() {
  return (
    <aside className="ml-[5px] flex w-[201px] shrink-0 flex-col bg-[#f0f0f0] text-[8px] text-[#222]">
      <div className="flex h-[13px] items-center justify-between pr-1 pl-[2px]">
        <h2>Properties</h2>
        <IconButton n="close" s={7} label="Close properties" className="h-3 w-2" />
      </div>
      <button type="button" className="flex h-[46px] items-center border border-[#d4d4d4] bg-[#efefef] pr-[2px] pl-[2px]">
        <span className="flex h-[42px] w-[42px] items-center justify-center bg-white">
          <svg width="42" height="42" viewBox="0 0 42 42" aria-hidden="true" stroke="#555" strokeWidth=".7">
            <path d="M1 24L30 5l12 7-30 17z" fill="#fbfbe9" /><path d="M12 29l30-17v6L12 36z" fill="#8f8f84" /><path d="M1 24l11 5v7L1 31z" fill="#fff" /><path d="M27 20v7" />
          </svg>
        </span>
        <span className="ml-[3px] flex-1 text-left">Family1</span>
        <Ico n="drop" s={6} />
      </button>
      <div className="flex h-[17px] items-center pt-px">
        <label className="flex h-[14px] w-[145px] items-center border border-[#b9b9b9] bg-[#e6e6e6] pr-1">
          <select aria-label="Category filter" className="flex-1 appearance-none bg-transparent pl-px"><option>Generic Models (1)</option></select>
          <Ico n="down" s={6} />
        </label>
        <button type="button" className="ml-1 flex items-center gap-[2px] whitespace-nowrap"><Ico n="typeprops" s={12} />Edit Type</button>
      </div>
      <div className="flex min-h-0 flex-1">
        <table className="h-full flex-1 table-fixed border-collapse bg-white leading-[11px]">
          <colgroup><col className="w-[90px]" /><col /><col className="w-[8px]" /></colgroup>
          <tbody>{ROWS.map((r) => <PropertyRow key={r.name} row={r} />)}</tbody>
        </table>
        <div className="flex w-[13px] flex-col items-center">
          <IconButton n="up" s={6} label="Scroll up" className="h-[11px] w-[10px]" />
          <span className="h-[183px] w-[9px] bg-[#cdcdcd]" />
          <span className="flex-1" />
          <IconButton n="down" s={6} label="Scroll down" className="h-[11px] w-[10px]" />
        </div>
      </div>
      <div className="flex h-[18px] items-center justify-between pr-[3px] pl-[2px]">
        <a href="#help" className="text-[#1a6fd0] underline">Properties help</a>
        <button type="button" disabled className="h-[14px] w-12 border border-[#bdbdbd] bg-[#cbcbcb] text-[#8a8a8a]">Apply</button>
      </div>
    </aside>
  );
}

function StatusBar() {
  return (
    <footer className="flex h-[17px] items-center bg-[#cacaca] pl-[3px] text-[8px] text-[#222]">
      <p className="whitespace-nowrap">Click to select, TAB for alternates, CTRL adds, SHIFT unsele</p>
      <IconButton n="worksets" s={12} label="Worksets" className="h-4 w-[14px]" />
      <label className="ml-[2px] flex h-[12px] w-[130px] items-center bg-white pr-[3px]">
        <select aria-label="Active workset" className="flex-1 appearance-none"><option /></select>
        <span className="opacity-40"><Ico n="down" s={6} /></span>
      </label>
      <span className="ml-1 flex items-center gap-px"><Ico n="editreq" s={11} />:0</span>
      <IconButton n="optset" s={11} label="Design options" className="ml-[13px] h-4 w-[14px]" />
      <IconButton n="optadd" s={10} label="Add to set" />
      <label className="ml-1 flex h-[12px] w-[134px] items-center bg-white pr-[3px] text-[#666]">
        <select aria-label="Design option" className="flex-1 appearance-none pl-px"><option>Main Model</option></select>
        <span className="opacity-40"><Ico n="down" s={6} /></span>
      </label>
      <span className="flex-1" />
      <div className="mr-[60px] flex items-center gap-[5px]">
        {["selA", "selB", "selC", "selD", "selE", "gear"].map((n) => <IconButton key={n} n={n} s={11} label={n} className="h-4 w-3" />)}
        <span className="flex items-center"><Ico n="filter" s={12} />:1</span>
      </div>
    </footer>
  );
}

export default function App() {
  return (
    <div className="min-h-screen bg-white pr-[30px] pl-[29px] font-['Lato','Open_Sans',sans-serif] text-[#222]">
      <div className="flex h-screen flex-col overflow-hidden bg-[#cdcdcd]">
        <TitleBar />
        <Tabs />
        <Ribbon />
        <div className="flex h-[18px] items-center border-b border-[#cdd6c4] bg-[#e4efd8] text-[8px]">
          <span className="w-[112px] pl-2">Modify | Generic Models</span>
          <label className="flex items-center gap-[2px] border-l border-[#bcc6b2] pl-1 leading-[15px]">
            <input type="checkbox" className="h-[9px] w-[9px] appearance-none border border-[#444] bg-white" />
            Moves With Nearby Elements
          </label>
        </div>
        <div className="mt-px flex min-h-0 flex-1">
          <ProjectBrowser />
          <Viewport />
          <Properties />
        </div>
        <StatusBar />
      </div>
    </div>
  );
}
